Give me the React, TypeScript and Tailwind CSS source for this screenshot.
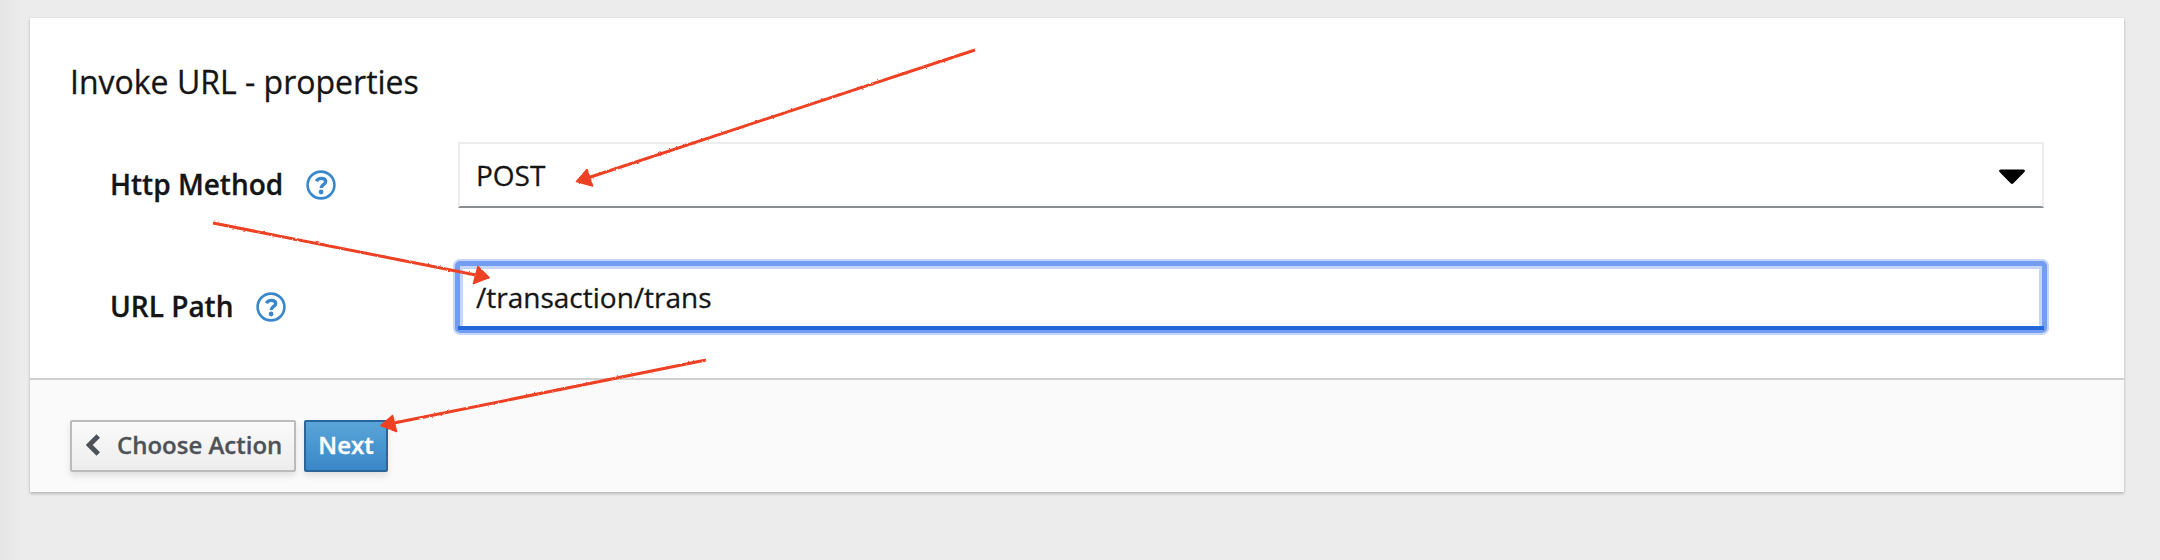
import React from "react";

function HelpIcon() {
  return (
    <svg viewBox="0 0 30 30" className="mt-0.5 h-[30px] w-[30px] shrink-0" fill="none">
      <circle cx="15" cy="15" r="13.4" strokeWidth="2.6" className="stroke-[#3a87cb]" />
      <path
        d="M10.4 11.300C11.300 9.400 12.900 8.400 15.300 8.400C17.900 8.400 19.700 9.700 19.700 11.700C19.700 14.500 15.200 14.300 15.200 18"
        className="stroke-[#3a87cb]"
        strokeWidth="3.4"
      />
      <circle cx="15.1" cy="22" r="2.4" className="fill-[#3a87cb]" />
    </svg>
  );
}

function FieldLabel({ children }: { children: React.ReactNode }) {
  return (
    <div className="flex h-[66px] w-[348px] shrink-0 items-center gap-[23px] pt-[18px]">
      <span className="text-[28px] leading-[44px] font-semibold [-webkit-text-stroke:0.3px]">{children}</span>
      <HelpIcon />
    </div>
  );
}

function Arrow({ line, head }: { line: string; head: string }) {
  return (
    <g>
      <path d={line} className="stroke-[#ee4023]" strokeWidth="3" fill="none" />
      <path d={head} className="fill-[#ee4023] stroke-[#ee4023]" strokeWidth="1.6" strokeLinejoin="round" />
    </g>
  );
}

export default function App() {
  return (
    <div className="relative h-[560px] w-[2160px] overflow-hidden bg-[#ececec] bg-[linear-gradient(to_right,#e5e5e5_0px,#ececec_22px)] pt-[18px] pl-[30px] font-['Open_Sans',sans-serif] text-[#151515]">
      <section className="flex h-[474px] w-[2094px] flex-col bg-white shadow-[0_2px_3px_rgba(3,3,3,0.2),0_0_1px_rgba(3,3,3,0.2)]">
        <div className="h-[360px] pl-10">
          <h1 className="pt-10 text-[32px] leading-[48px] font-normal [-webkit-text-stroke:0.3px]">
            Invoke URL - properties
          </h1>
          <form className="mt-9 flex flex-col gap-14 pl-10">
            <div className="flex">
              <FieldLabel>Http Method</FieldLabel>
              <div className="flex h-[66px] w-[1586px] items-center justify-between border-2 border-[#ededed] border-b-[#8a8d90] pr-4 pl-4">
                <span className="text-[28px] leading-[44px] [-webkit-text-stroke:0.3px]">POST</span>
                <svg viewBox="0 0 28 16" className="mt-1 h-4 w-7">
                  <path d="M2.500 .5H25.500Q28 1.200 26.200 3.200L15.400 14.200Q14 15.800 12.600 14.200L1.800 3.200Q0 1.200 2.500 .5Z" />
                </svg>
              </div>
            </div>
            <div className="flex">
              <FieldLabel>URL Path</FieldLabel>
              <div className="relative h-[66px] w-[1586px]">
                <input
                  readOnly
                  value="/transaction/trans"
                  className="h-[66px] w-[1586px] border-2 border-b-4 border-[#ededed] border-b-[#2b6cd9] bg-white px-4 pt-0.5 text-[28px] leading-[44px] outline-none [-webkit-text-stroke:0.3px]"
                />
                <div className="pointer-events-none absolute -inset-[5px] rounded-[8px] border-[10px] border-[#c6d6f8] border-b-transparent" />
                <div className="pointer-events-none absolute -inset-[3px] rounded-[5px] border-[5px] border-[#739df2] shadow-[0_0_0_2px_#c6d6f8]" />
                <div className="pointer-events-none absolute inset-x-0 bottom-0 h-1 bg-[#2467d8]" />
              </div>
            </div>
          </form>
        </div>
        <footer className="flex h-[114px] gap-2 border-t-2 border-[#d1d1d1] bg-[#fafafa] pt-10 pl-10">
          <button className="flex h-[52px] w-[226px] items-center rounded-[2px] border-2 border-[#bbb] bg-linear-to-b from-[#fafafa] to-[#ededed] pb-0.5 pl-[14px] text-[24px] font-semibold text-[#4d5258] shadow-[0_4px_6px_rgba(3,3,3,0.1)] [-webkit-text-stroke:0.3px]">
            <svg viewBox="0 0 14 22" className="h-[22px] w-[14px]" fill="none">
              <path d="M12.300 2L3.200 11L12.300 20" className="stroke-[#4d5258]" strokeWidth="5" />
            </svg>
            <span className="ml-[17px] whitespace-nowrap">Choose Action</span>
          </button>
          <button className="flex h-[52px] w-[84px] items-center justify-center rounded-[2px] border-2 border-[#2b669a] bg-linear-to-b from-[#59a5d8] to-[#3a87c8] pb-0.5 text-[24px] font-semibold text-white shadow-[0_4px_6px_rgba(3,3,3,0.1)] [-webkit-text-stroke:0.4px]">
            Next
          </button>
        </footer>
      </section>
      <svg viewBox="0 0 2160 560" className="pointer-events-none absolute inset-0 h-[560px] w-[2160px]">
        <filter id="rough" filterUnits="userSpaceOnUse" x="200" y="30" width="800" height="420">
          <feTurbulence type="fractalNoise" baseFrequency="0.35" numOctaves="2" seed="4" />
          <feDisplacementMap in="SourceGraphic" scale="2.2" xChannelSelector="R" yChannelSelector="G" />
        </filter>
        <g filter="url(#rough)">
          <Arrow line="M975 50L589 177.500" head="M576.500 181.500L587 169.500L592.500 186Z" />
          <Arrow line="M213 223L476 275" head="M489 277.500L478 266.500L473.500 283.500Z" />
          <Arrow line="M706 360L394 423" head="M381 425.500L392.500 415.500L396.500 431.500Z" />
        </g>
      </svg>
    </div>
  );
}
